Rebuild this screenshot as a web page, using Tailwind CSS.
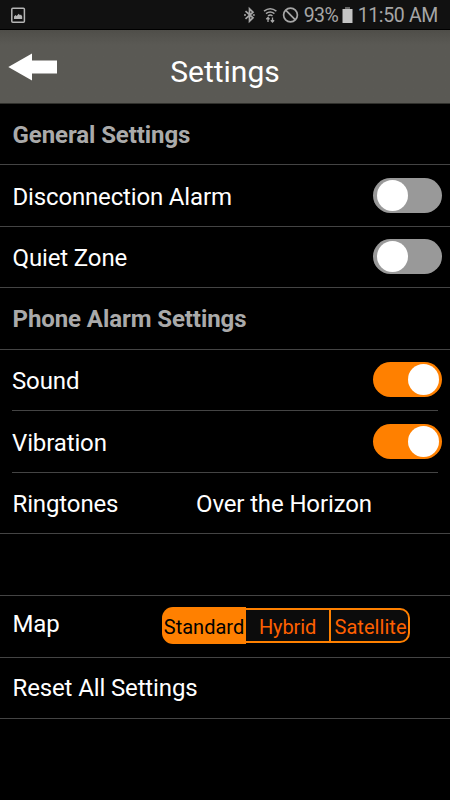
<!DOCTYPE html>
<html lang="en">
<head>
<meta charset="utf-8">
<title>Settings</title>
<script src="https://cdn.jsdelivr.net/npm/@tailwindcss/browser@4"></script>
</head>
<body class="bg-black">
<div class="w-[450px] h-[800px] overflow-hidden bg-black text-white font-['Roboto',sans-serif] text-[24px] leading-[28px] tracking-[-0.13px] flex flex-col">
  <div class="h-[30px] shrink-0 bg-[#111111] border-b border-black flex items-center text-[#a6a6a6] text-[19.5px] leading-[24px]">
    <svg class="ml-[11px] mt-px shrink-0" width="15" height="17" viewBox="0 0 15 17"><rect x="0.8" y="1.3" width="12.6" height="13.9" rx="1" fill="none" stroke="#b5b5b5" stroke-width="1.5"/><path d="M3 12V9.500l1.500-1.500 1.200 1 2-2.300L9 8.300l1-.8 1.200 2V12z" fill="#b5b5b5"/></svg>
    <div class="flex-1"></div>
    <svg class="shrink-0 mt-px" width="58" height="18" viewBox="0 0 58 18"><g fill="none" stroke="#a6a6a6" stroke-width="1.500"><path d="M2.500 5.200L10 11.800 6.500 15.200V2.800L10 6.200 2.500 12.800" stroke-width="1.700"/><path d="M1 9h2M9.800 9h2" stroke-width="1.700"/><path d="M21 5.200c4-3.200 8.400-3.200 12.400 0M23 7.700c2.800-2.200 5.600-2.200 8.400 0M25 10c1.500-1.200 3-1.200 4.500 0"/><path d="M25 16v-4.500M23.300 13.200L25 11.500l1.500 1.700M29.500 11.500V16M27.800 14.300L29.500 16l1.600-1.700" stroke-width="1.300"/><circle cx="47.500" cy="9" r="6.900" stroke-width="1.700"/><path d="M42.700 4.200l9.600 9.600" stroke-width="1.700"/></g></svg>
    <span class="ml-[3px] w-[36px] whitespace-nowrap tracking-[-0.5px] mt-[2px]">93%</span>
    <svg class="shrink-0 mt-px ml-[2px]" width="11" height="16" viewBox="0 0 11 16"><path d="M0.500 2h10v14h-10z" fill="#c4c4c4"/><path d="M3 0h5v2H3z" fill="#666"/></svg>
    <span class="ml-[5px] mr-[12px] whitespace-nowrap tracking-[-0.35px] mt-[3px]">11:50 AM</span>
  </div>
  <div class="h-[74px] shrink-0 bg-linear-to-b from-[#4f4e49] to-[#5a5954] to-20% border-b border-[#30302c] flex items-center relative">
    <svg class="ml-[8px] mt-px" width="50" height="28" viewBox="0 0 50 28"><path d="M0.300 14L24 0.500V7.500H49V20.500H24V27.500z" fill="#fff"/></svg>
    <h1 class="absolute inset-x-0 top-[24px] text-center text-[30px] leading-[36px] tracking-normal">Settings</h1>
  </div>
  <div class="h-[61px] shrink-0 border-b border-[#444] px-[12.500px] flex items-center font-bold text-[#aaa] tracking-[-0.08px]"><span class="pt-[2px]">General Settings</span></div>
  <div class="h-[62px] shrink-0 border-b border-[#444] pl-[12.500px] pr-[8px] flex items-center justify-between"><span class="pt-[2px] tracking-[-0.16px]">Disconnection Alarm</span>
    <div class="w-[69px] h-[35px] rounded-full bg-[#999] p-[2px] pl-[4px] mb-px"><div class="size-[31px] rounded-full bg-white"></div></div></div>
  <div class="h-[61px] shrink-0 border-b border-[#444] pl-[12.500px] pr-[8px] flex items-center justify-between"><span class="pt-px">Quiet Zone</span>
    <div class="w-[69px] h-[35px] rounded-full bg-[#999] p-[2px] pl-[4px] mb-px"><div class="size-[31px] rounded-full bg-white"></div></div></div>
  <div class="h-[62px] shrink-0 border-b border-[#444] px-[12.500px] flex items-center font-bold text-[#aaa] tracking-[-0.08px]"><span class="pt-px">Phone Alarm Settings</span></div>
  <div class="h-[61px] shrink-0 ml-[12px] mr-[12px] border-b border-[#444] flex items-center justify-between"><span class="pt-px">Sound</span>
    <div class="w-[69px] h-[35px] rounded-full bg-[#ff8000] p-[2px] pr-[3px] mr-[-4px] mb-px flex justify-end"><div class="size-[31px] rounded-full bg-white"></div></div></div>
  <div class="h-[62px] shrink-0 ml-[12px] mr-[12px] border-b border-[#444] flex items-center justify-between"><span class="pt-[2px]">Vibration</span>
    <div class="w-[69px] h-[35px] rounded-full bg-[#ff8000] p-[2px] pr-[3px] mr-[-4px] flex justify-end"><div class="size-[31px] rounded-full bg-white"></div></div></div>
  <div class="h-[61px] shrink-0 border-b border-[#444] pl-[12.500px] flex items-center"><span class="w-[183.500px] pt-px">Ringtones</span><span class="pt-px">Over the Horizon</span></div>
  <div class="h-[62px] shrink-0 border-b border-[#444]"></div>
  <div class="h-[62px] shrink-0 border-b border-[#444] pl-[12.500px] flex items-center"><span class="w-[149.500px] mt-[-6px]">Map</span>
    <div class="flex items-center w-[248px] h-[37px] mt-[-2px] text-[20px] leading-[33px] text-[#ff6000] whitespace-nowrap">
      <span class="w-[84px] h-[37px] shrink-0 rounded-l-[11px] bg-[#ff8000] text-black flex justify-center pt-[4px] tracking-normal">Standard</span>
      <span class="w-[83px] h-[35px] shrink-0 border-y-2 border-[#ff8000] bg-[#0c0c0c] flex justify-center pt-px">Hybrid</span>
      <span class="flex-1 h-[35px] border-2 border-[#ff8000] bg-[#0c0c0c] rounded-r-[10px] flex justify-center pt-px pl-[2px] tracking-[0.05px]">Satellite</span>
    </div></div>
  <div class="h-[61px] shrink-0 border-b border-[#444] pl-[12.500px] flex items-center"><span>Reset All Settings</span></div>
</div>
</body>
</html>
